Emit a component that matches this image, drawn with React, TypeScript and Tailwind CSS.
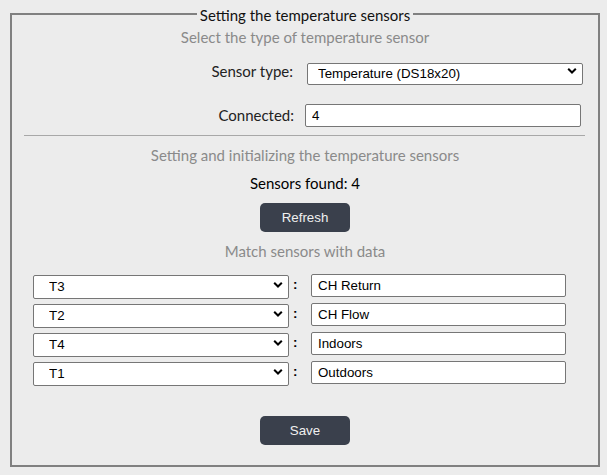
import React from "react";

const head = "font-['Lato','Noto_Sans',sans-serif] text-[15px] leading-[20px]";
const ctl = "font-['Liberation_Sans',Arial,sans-serif] text-[13.33px] text-black";

function Chevron() {
  return (
    <svg
      className="pointer-events-none absolute right-[6px] top-1/2 -translate-y-1/2"
      width="10"
      height="7"
      viewBox="0 0 10 7"
    >
      <path d="M1.2 1.2 L5 5 L8.8 1.2" fill="none" stroke="#000" strokeWidth="2" />
    </svg>
  );
}

function Select({ value, w, pl, h }: { value: string; w: string; pl: string; h: string }) {
  return (
    <div className={`relative ${w} ${h}`}>
      <select
        defaultValue={value}
        className={`${ctl} appearance-none w-full h-full bg-white border border-[#767676] rounded-[2px] ${pl} pr-6 outline-none`}
      >
        <option>{value}</option>
      </select>
      <Chevron />
    </div>
  );
}

function TextInput({ value, w, h }: { value: string; w: string; h: string }) {
  return (
    <input
      defaultValue={value}
      className={`${ctl} ${w} ${h} bg-white border border-[#767676] rounded-[2px] pl-[6px] outline-none`}
    />
  );
}

const rows = [
  ["T3", "CH Return"],
  ["T2", "CH Flow"],
  ["T4", "Indoors"],
  ["T1", "Outdoors"],
];

export default function App() {
  return (
    <div className="min-h-screen bg-[#ececec] pt-[3px] pl-[10px]">
      <fieldset className="w-[590px] border-2 border-[#808080] pb-[20px]">
        <legend className={`${head} mx-auto px-[3px] pt-[2px] text-[#111]`}>
          Setting the temperature sensors
        </legend>

        <div className={`${head} mt-[2px] text-center text-[#8a8a8a]`}>
          Select the type of temperature sensor
        </div>

        <div className="mt-[13px] flex items-center justify-end pr-[15px]">
          <span className={`${head} mr-[14px] text-[#222]`}>Sensor type:</span>
          <Select value="Temperature (DS18x20)" w="w-[276px]" h="h-[22px]" pl="pl-[10px]" />
        </div>

        <div className="mt-[22px] flex items-center justify-end pr-[17px]">
          <span className={`${head} mr-[11px] -mt-[2px] text-[#222]`}>Connected:</span>
          <TextInput value="4" w="w-[276px]" h="h-[23px]" />
        </div>

        <hr className="mt-[8px] ml-[12px] mr-[13px] border-0 border-t border-[#a8a8a8]" />

        <div className={`${head} mt-[9px] text-center text-[#8a8a8a]`}>
          Setting and initializing the temperature sensors
        </div>

        <div className={`${head} mt-[8px] text-center text-black`}>Sensors found: 4</div>

        <div className="mt-[10px] flex justify-center">
          <button className={`font-['Liberation_Sans',Arial,sans-serif] text-[13.33px] w-[90px] h-[29px] rounded-[5px] bg-[#3a404c] text-[#f0f0f0]`}>
            Refresh
          </button>
        </div>

        <div className={`${head} mt-[9px] text-center text-[#8a8a8a]`}>Match sensors with data</div>

        <div className="mt-[12px] flex flex-col gap-[5px] pl-[21px]">
          {rows.map(([t, name]) => (
            <div key={t} className="flex items-end">
              <Select value={t} w="w-[256px]" h="h-[24px]" pl="pl-[15px]" />
              <span className={`${ctl} w-[22px] pl-[4px] font-bold self-center`}>:</span>
              <TextInput value={name} w="w-[255px]" h="h-[23px]" />
            </div>
          ))}
        </div>

        <div className="mt-[32px] flex justify-center">
          <button className={`font-['Liberation_Sans',Arial,sans-serif] text-[13.33px] w-[90px] h-[29px] rounded-[5px] bg-[#3a404c] text-[#f0f0f0]`}>
            Save
          </button>
        </div>
      </fieldset>
    </div>
  );
}
